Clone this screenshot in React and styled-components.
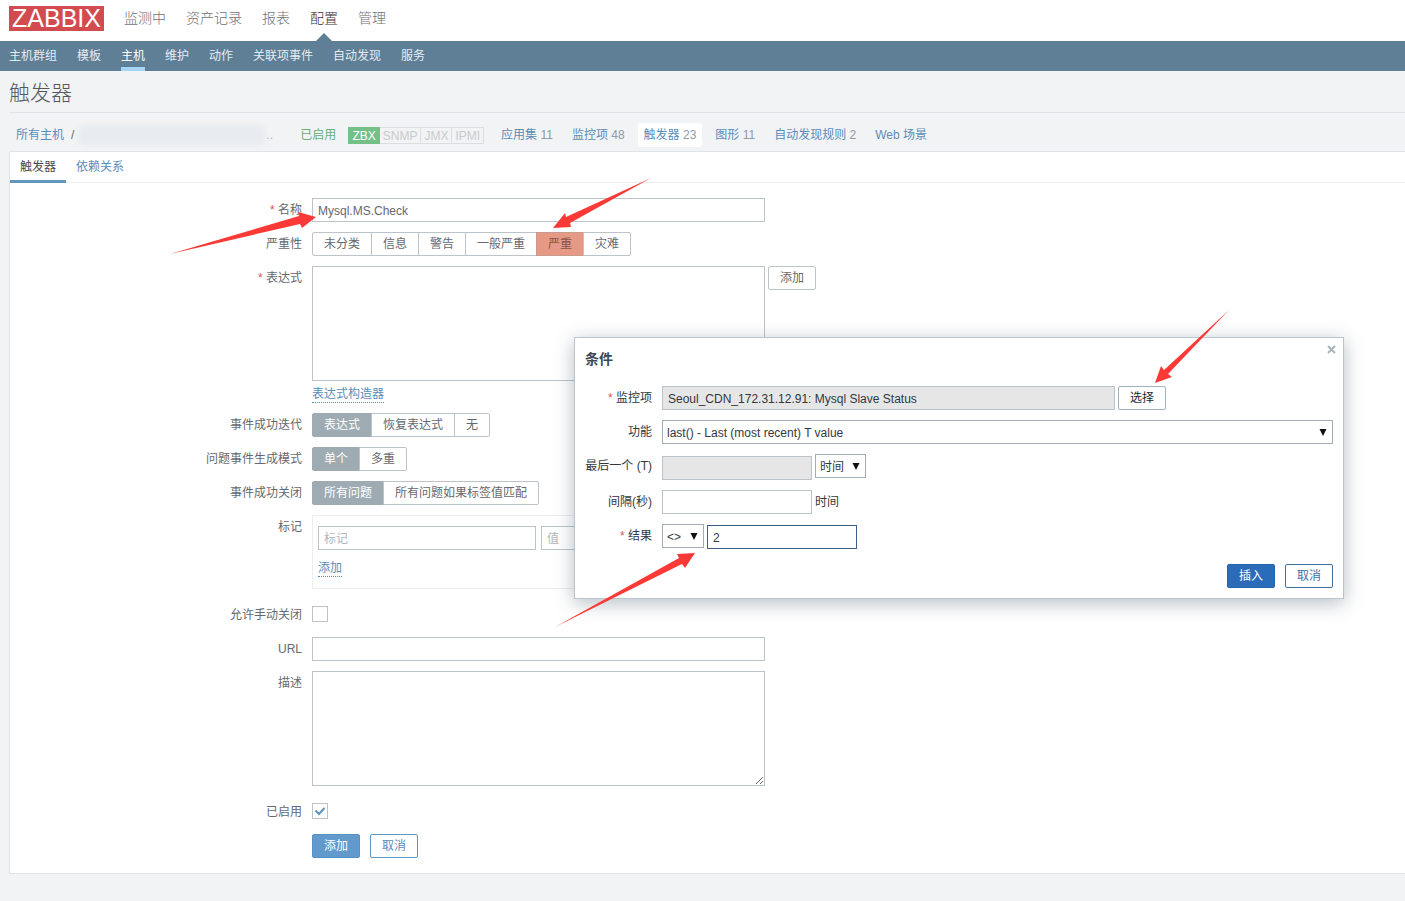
import React from 'react';
import styled, { createGlobalStyle, css } from 'styled-components';

const GlobalStyle = createGlobalStyle`
  * {
    box-sizing: border-box;
  }

  body {
    margin: 0;
    background-color: #f1f3f4;
    color: #65696e;
    font-family: "Liberation Sans", "Noto Sans CJK SC", sans-serif;
    font-size: 12px;
    line-height: 16px;
  }

  a {
    text-decoration: none;
  }

  button,
  input,
  select,
  textarea {
    margin: 0;
    font-family: inherit;
    font-size: 12px;
  }
`;

const selectArrow = `url("data:image/svg+xml,%3Csvg xmlns='http://www.w3.org/2000/svg' width='8' height='7'%3E%3Cpath d='M0.5 0h7L4 7z' fill='%23111'/%3E%3C/svg%3E")`;
const checkMark = `url("data:image/svg+xml,%3Csvg xmlns='http://www.w3.org/2000/svg' width='14' height='14'%3E%3Cpath d='M2.500 6.500l3.500 3.500 5.500-6' fill='none' stroke='%235e93bf' stroke-width='2'/%3E%3C/svg%3E")`;

const Page = styled.div`
  position: relative;
  min-height: 100vh;
`;

const Header = styled.header`
  display: flex;
  align-items: center;
  height: 41px;
  padding: 0 9px 4px;
  background-color: #ffffff;
`;

const Logo = styled.a`
  width: 95px;
  height: 25px;
  margin-right: 10px;
  background-color: #d24b4f;
  color: #ffffff;
  font-size: 25px;
  line-height: 25px;
  text-align: center;
`;

const MainNav = styled.nav`
  display: flex;
  padding-bottom: 2px;
`;

const MainLink = styled.a`
  position: relative;
  padding: 0 10px;
  color: ${(props) => (props.$active ? '#2f3337' : '#6d7277')};
  font-size: 14px;
  font-weight: 300;
  line-height: 20px;

  ${(props) =>
    props.$active &&
    css`
      &::after {
        content: '';
        position: absolute;
        top: 25px;
        left: 50%;
        margin-left: -8px;
        border: 8px solid transparent;
        border-top: 0;
        border-bottom-color: #5f7f97;
      }
    `}
`;

const SubNav = styled.nav`
  display: flex;
  gap: 20px;
  height: 30px;
  padding: 0 9px;
  background-color: #5f7f97;
`;

const SubLink = styled.a`
  height: 30px;
  border-bottom: 4px solid ${(props) => (props.$active ? '#a6d4f5' : 'transparent')};
  color: ${(props) => (props.$active ? '#ffffff' : '#e4ecf2')};
  line-height: 30px;
`;

const Title = styled.h1`
  margin: 0 0 0 9px;
  height: 42px;
  border-bottom: 1px solid #dfe4e7;
  color: #55595e;
  font-size: 21px;
  font-weight: 300;
  line-height: 43px;
`;

const Breadcrumbs = styled.div`
  display: flex;
  align-items: center;
  height: 38px;
  padding: 6px 0 0 16px;
`;

const Link = styled.a`
  color: #5b8db8;
`;

const Slash = styled.span`
  margin: 0 4px 0 7px;
`;

const HiddenHost = styled.span`
  width: 188px;
  height: 20px;
  border-radius: 8px;
  background-color: #e8ecf0;
  filter: blur(2px);
`;

const Dots = styled.span`
  width: 34px;
  color: #a9b4bc;
`;

const Enabled = styled.a`
  margin-right: 12px;
  color: #6cae78;
`;

const Interfaces = styled.div`
  display: flex;
  margin-right: 11px;
`;

const Interface = styled.span`
  height: 17px;
  padding: 0 3px;
  border: 1px solid ${(props) => (props.$on ? '#74c087' : '#dcdfe1')};
  border-left-width: ${(props) => (props.$on ? '1px' : '0')};
  background-color: ${(props) => (props.$on ? '#74c087' : 'transparent')};
  color: ${(props) => (props.$on ? '#ffffff' : '#c8cccf')};
  line-height: 16px;
`;

const HostLink = styled.a`
  margin-right: 7px;
  padding: 0 6px;
  border-radius: 2px;
  background-color: ${(props) => (props.$active ? '#ffffff' : 'transparent')};
  color: #5b8db8;
  line-height: 24px;

  span {
    color: #8f9aa3;
  }
`;

const Content = styled.main`
  margin-left: 9px;
  padding-bottom: 15px;
  border: 1px solid #dfe4e7;
  border-right: 0;
  background-color: #ffffff;
`;

const Tabs = styled.div`
  display: flex;
  border-bottom: 1px solid #ebeef0;
`;

const Tab = styled.a`
  margin-bottom: -1px;
  padding: 2px 10px 0;
  border-bottom: 3px solid ${(props) => (props.$active ? '#6595bd' : 'transparent')};
  color: ${(props) => (props.$active ? '#45494d' : '#5b8db8')};
  line-height: 26px;
`;

const Form = styled.form`
  display: grid;
  gap: 10px;
  padding-top: 15px;
`;

const Row = styled.div`
  display: grid;
  grid-template-columns: ${(props) => props.$label || '292px'} 1fr;
  column-gap: 10px;
  padding-top: ${(props) => (props.$tall ? '4px' : '0')};
`;

const Label = styled.label`
  line-height: 24px;
  text-align: right;
  white-space: nowrap;

  ${(props) =>
    props.$required &&
    css`
      &::before {
        content: '* ';
        color: #d9555a;
      }
    `}
`;

const Field = styled.div`
  display: flex;
  align-items: flex-start;
  gap: ${(props) => props.$gap || '3px'};
  line-height: 24px;
`;

// inputs that sit slightly below the select next to them
const LowField = styled.div`
  display: flex;
  padding-top: ${(props) => props.$offset};
`;

const Stack = styled.div`
  display: flex;
  flex-direction: column;
  align-items: flex-start;
  gap: 5px;
`;

const TextInput = styled.input`
  width: ${(props) => props.$width || '453px'};
  height: 24px;
  padding: 1px 5px 0;
  border: 1px solid ${(props) => (props.$focused ? '#3d5f85' : '#bcc4c9')};
  outline: none;
  background-color: #ffffff;
  color: inherit;

  &:disabled,
  &:read-only {
    background-color: #e6e6e6;
  }

  &::placeholder {
    color: #b0b6ba;
  }
`;

const TextArea = styled.textarea`
  display: block;
  width: 453px;
  height: 115px;
  padding: 4px 5px;
  border: 1px solid #bcc4c9;
  outline: none;
  background-color: #ffffff;
  resize: vertical;
`;

const DottedButton = styled.button`
  padding: 0;
  border: 0;
  border-bottom: 1px dotted #5b8db8;
  background: none;
  color: #5b8db8;
  line-height: 16px;
`;

const variants = {
  grey: ['#ffffff', '#bcc4c9', '#65696e'],
  plain: ['#ffffff', '#9fb3c2', '#26292c'],
  primary: ['#619acb', '#5790c2', '#ffffff'],
  outline: ['#ffffff', '#5f96c4', '#5b8db8'],
  strong: ['#2a6cb8', '#2663a9', '#ffffff'],
  strongOutline: ['#ffffff', '#3d6fa5', '#3f70a8'],
};

const Button = styled.button`
  height: 24px;
  padding: 1px 11px 0;
  border: 1px solid ${(props) => variants[props.$variant][1]};
  border-radius: 2px;
  background-color: ${(props) => variants[props.$variant][0]};
  color: ${(props) => variants[props.$variant][2]};
  line-height: 21px;
`;

const SegmentGroup = styled.div`
  display: flex;
`;

const Segment = styled.label`
  height: 24px;
  padding: 0 11px;
  border: 1px solid #bcc4c9;
  line-height: 22px;

  & + & {
    margin-left: -1px;
  }

  &:first-child {
    border-radius: 2px 0 0 2px;
  }

  &:last-child {
    border-radius: 0 2px 2px 0;
  }

  &:has(input:checked) {
    border-color: ${(props) => (props.$severity ? '#c99a8e' : '#9eabb3')};
    background-color: ${(props) => (props.$severity ? '#e69985' : '#9eabb3')};
    color: ${(props) => (props.$severity ? '#8b5348' : '#ffffff')};
  }

  input {
    position: absolute;
    appearance: none;
  }
`;

const TagBox = styled.div`
  width: 520px;
  height: 74px;
  padding: 10px 5px;
  border: 1px solid #ebeef0;
`;

const TagFields = styled.div`
  display: flex;
  gap: 5px;
  margin-bottom: 10px;
`;

const Checkbox = styled.input`
  appearance: none;
  width: 16px;
  height: 16px;
  margin-top: 3px;
  border: 1px solid #bcc4c9;
  background-color: #ffffff;

  &:checked {
    background-image: ${checkMark};
  }
`;

const Dialog = styled.section`
  position: absolute;
  top: 337px;
  left: 574px;
  width: 770px;
  padding: 48px 10px 10px;
  border: 1px solid #b9c6cf;
  background-color: #ffffff;
  box-shadow: 0 4px 18px rgba(40, 70, 90, 0.35);
  color: #33383c;
`;

const DialogTitle = styled.h2`
  position: absolute;
  top: 11px;
  left: 10px;
  margin: 0;
  color: #3c4852;
  font-size: 14px;
  line-height: 20px;
`;

const CloseButton = styled.button`
  position: absolute;
  top: 7px;
  right: 7px;
  display: flex;
  padding: 0;
  border: 0;
  background: none;
`;

const DialogForm = styled.form`
  display: grid;
  gap: 10px;
`;

const Select = styled.select`
  appearance: none;
  width: ${(props) => props.$width || '100%'};
  height: 24px;
  padding: 1px 4px 0;
  border: 1px solid #a3adb5;
  border-radius: 0;
  outline: none;
  background: #ffffff ${selectArrow} no-repeat right 5px top 8px;
  color: inherit;
`;

const DialogButtons = styled.div`
  display: flex;
  justify-content: flex-end;
  gap: 10px;
  padding-top: 5px;
`;

const Arrows = styled.svg`
  position: absolute;
  top: 0;
  left: 0;
  pointer-events: none;
`;

const mainLinks = ['监测中', '资产记录', '报表', '配置', '管理'];
const subLinks = ['主机群组', '模板', '主机', '维护', '动作', '关联项事件', '自动发现', '服务'];
const hostLinks = [
  ['应用集', 11],
  ['监控项', 48],
  ['触发器', 23],
  ['图形', 11],
  ['自动发现规则', 2],
  ['Web 场景'],
];

const Segments = ({ name, options, checked, severity }) => (
  <SegmentGroup role="radiogroup">
    {options.map((option) => (
      <Segment key={option} $severity={severity}>
        <input type="radio" name={name} defaultChecked={option === checked} />
        {option}
      </Segment>
    ))}
  </SegmentGroup>
);

const ConditionDialog = () => (
  <Dialog role="dialog" aria-labelledby="dialog-title">
    <DialogTitle id="dialog-title">条件</DialogTitle>
    <CloseButton type="button" aria-label="关闭">
      <svg width="9" height="9" viewBox="0 0 9 9">
        <path d="M1 1l7 7M8 1l-7 7" stroke="#a9b3ba" strokeWidth="2" />
      </svg>
    </CloseButton>
    <DialogForm>
      <Row $label="67px">
        <Label htmlFor="item" $required>监控项</Label>
        <Field>
          <TextInput id="item" readOnly defaultValue="Seoul_CDN_172.31.12.91: Mysql Slave Status" />
          <Button type="button" $variant="plain">选择</Button>
        </Field>
      </Row>
      <Row $label="67px">
        <Label htmlFor="function">功能</Label>
        <Select id="function">
          <option>last() - Last (most recent) T value</option>
        </Select>
      </Row>
      <Row $label="67px">
        <Label htmlFor="last">最后一个 (T)</Label>
        <Field>
          <LowField $offset="2px">
            <TextInput id="last" $width="150px" disabled />
          </LowField>
          <Select aria-label="单位" $width="51px">
            <option>时间</option>
          </Select>
        </Field>
      </Row>
      <Row $label="67px">
        <Label htmlFor="shift">间隔(秒)</Label>
        <Field>
          <TextInput id="shift" $width="150px" />
          时间
        </Field>
      </Row>
      <Row $label="67px">
        <Label htmlFor="result" $required>结果</Label>
        <Field>
          <Select aria-label="运算符" $width="42px">
            <option>&lt;&gt;</option>
          </Select>
          <LowField $offset="1px">
            <TextInput id="result" $width="150px" $focused defaultValue="2" />
          </LowField>
        </Field>
      </Row>
      <DialogButtons>
        <Button type="button" $variant="strong">插入</Button>
        <Button type="button" $variant="strongOutline">取消</Button>
      </DialogButtons>
    </DialogForm>
  </Dialog>
);

const App = () => {
  return (
    <Page>
      <GlobalStyle />
      <Header>
        <Logo href="#">ZABBIX</Logo>
        <MainNav>
          {mainLinks.map((text) => (
            <MainLink key={text} href="#" $active={text === '配置'}>{text}</MainLink>
          ))}
        </MainNav>
      </Header>
      <SubNav>
        {subLinks.map((text) => (
          <SubLink key={text} href="#" $active={text === '主机'}>{text}</SubLink>
        ))}
      </SubNav>
      <Title>触发器</Title>
      <Breadcrumbs>
        <Link href="#">所有主机</Link>
        <Slash>/</Slash>
        <HiddenHost />
        <Dots>..</Dots>
        <Enabled href="#">已启用</Enabled>
        <Interfaces>
          <Interface $on>ZBX</Interface>
          <Interface>SNMP</Interface>
          <Interface>JMX</Interface>
          <Interface>IPMI</Interface>
        </Interfaces>
        {hostLinks.map(([text, count]) => (
          <HostLink key={text} href="#" $active={text === '触发器'}>
            {text}
            {count && <span> {count}</span>}
          </HostLink>
        ))}
      </Breadcrumbs>
      <Content>
        <Tabs>
          <Tab href="#" $active>触发器</Tab>
          <Tab href="#">依赖关系</Tab>
        </Tabs>
        <Form>
          <Row>
            <Label htmlFor="name" $required>名称</Label>
            <TextInput id="name" defaultValue="Mysql.MS.Check" />
          </Row>
          <Row>
            <Label as="span">严重性</Label>
            <Segments
              name="severity"
              options={['未分类', '信息', '警告', '一般严重', '严重', '灾难']}
              checked="严重"
              severity
            />
          </Row>
          <Row>
            <Label htmlFor="expression" $required>表达式</Label>
            <Stack>
              <Field>
                <TextArea id="expression" />
                <Button type="button" $variant="grey">添加</Button>
              </Field>
              <DottedButton type="button">表达式构造器</DottedButton>
            </Stack>
          </Row>
          <Row>
            <Label as="span">事件成功迭代</Label>
            <Segments name="recovery" options={['表达式', '恢复表达式', '无']} checked="表达式" />
          </Row>
          <Row>
            <Label as="span">问题事件生成模式</Label>
            <Segments name="mode" options={['单个', '多重']} checked="单个" />
          </Row>
          <Row>
            <Label as="span">事件成功关闭</Label>
            <Segments name="close" options={['所有问题', '所有问题如果标签值匹配']} checked="所有问题" />
          </Row>
          <Row>
            <Label htmlFor="tag">标记</Label>
            <TagBox>
              <TagFields>
                <TextInput id="tag" $width="218px" placeholder="标记" />
                <TextInput aria-label="值" $width="218px" placeholder="值" />
              </TagFields>
              <DottedButton type="button">添加</DottedButton>
            </TagBox>
          </Row>
          <Row $tall>
            <Label htmlFor="manual">允许手动关闭</Label>
            <Checkbox id="manual" type="checkbox" />
          </Row>
          <Row>
            <Label htmlFor="url">URL</Label>
            <TextInput id="url" />
          </Row>
          <Row>
            <Label htmlFor="description">描述</Label>
            <TextArea id="description" />
          </Row>
          <Row $tall>
            <Label htmlFor="enabled">已启用</Label>
            <Checkbox id="enabled" type="checkbox" defaultChecked />
          </Row>
          <Row>
            <span />
            <Field $gap="10px">
              <Button type="button" $variant="primary">添加</Button>
              <Button type="button" $variant="outline">取消</Button>
            </Field>
          </Row>
        </Form>
      </Content>
      <ConditionDialog />
      <Arrows width="1240" height="640" fill="#fb3a37" aria-hidden="true">
        <path d="M170 254L299 216L298 212L316 217L302 228L300 224Z" />
        <path d="M651 178L566 217L565 213L553 228L571 227L570 223Z" />
        <path d="M555 627L679 558L677 554L695 553L685 568L682 564Z" />
        <path d="M1229 310L1164 370L1161 366L1155 383L1172 377L1168 374Z" />
      </Arrows>
    </Page>
  );
};

export default App;
